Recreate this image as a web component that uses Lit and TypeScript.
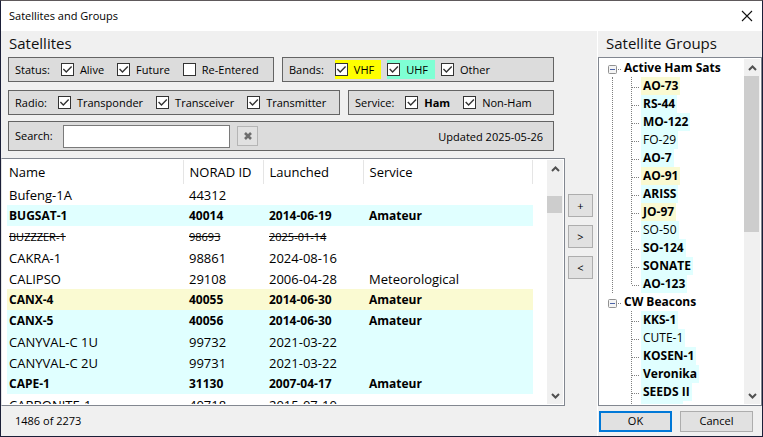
import { LitElement, html, css, svg } from "lit";
import { customElement, property } from "lit/decorators.js";
import { classMap } from "lit/directives/class-map.js";

interface Sat {
  name: string;
  id: string;
  launched: string;
  service?: string;
  bold?: boolean;
  gone?: boolean;
  tint?: "vhf" | "uhf";
}

interface Leaf {
  name: string;
  bold?: boolean;
  tint: "vhf" | "uhf";
}

interface Option {
  text: string;
  checked: boolean;
  kind?: string;
}

const SATS: Sat[] = [
  { name: "Bufeng-1A", id: "44312", launched: "" },
  { name: "BUGSAT-1", id: "40014", launched: "2014-06-19", service: "Amateur", bold: true, tint: "uhf" },
  { name: "BUZZZER-1", id: "98693", launched: "2025-01-14", gone: true },
  { name: "CAKRA-1", id: "98861", launched: "2024-08-16" },
  { name: "CALIPSO", id: "29108", launched: "2006-04-28", service: "Meteorological" },
  { name: "CANX-4", id: "40055", launched: "2014-06-30", service: "Amateur", bold: true, tint: "vhf" },
  { name: "CANX-5", id: "40056", launched: "2014-06-30", service: "Amateur", bold: true, tint: "uhf" },
  { name: "CANYVAL-C 1U", id: "99732", launched: "2021-03-22", tint: "uhf" },
  { name: "CANYVAL-C 2U", id: "99731", launched: "2021-03-22", tint: "uhf" },
  { name: "CAPE-1", id: "31130", launched: "2007-04-17", service: "Amateur", bold: true, tint: "uhf" },
  { name: "CARBONITE-1", id: "40718", launched: "2015-07-10" },
];

const GROUPS: { name: string; items: Leaf[] }[] = [
  {
    name: "Active Ham Sats",
    items: [
      { name: "AO-73", bold: true, tint: "vhf" },
      { name: "RS-44", bold: true, tint: "uhf" },
      { name: "MO-122", bold: true, tint: "uhf" },
      { name: "FO-29", tint: "uhf" },
      { name: "AO-7", bold: true, tint: "uhf" },
      { name: "AO-91", bold: true, tint: "vhf" },
      { name: "ARISS", bold: true, tint: "uhf" },
      { name: "JO-97", bold: true, tint: "vhf" },
      { name: "SO-50", tint: "uhf" },
      { name: "SO-124", bold: true, tint: "uhf" },
      { name: "SONATE", bold: true, tint: "uhf" },
      { name: "AO-123", bold: true, tint: "uhf" },
    ],
  },
  {
    name: "CW Beacons",
    items: [
      { name: "KKS-1", bold: true, tint: "uhf" },
      { name: "CUTE-1", tint: "uhf" },
      { name: "KOSEN-1", bold: true, tint: "uhf" },
      { name: "Veronika", bold: true, tint: "uhf" },
      { name: "SEEDS II", bold: true, tint: "uhf" },
      { name: "CUBEL", bold: true, tint: "uhf" },
    ],
  },
];

const chevron = (down: boolean) => html`<svg viewBox="0 0 9 6" width="9" height="6">
  ${svg`<path d=${down ? "M1 1 L4.5 4.5 L8 1" : "M1 5 L4.5 1.5 L8 5"} fill="none" stroke="#505050" stroke-width="2"/>`}
</svg>`;

@customElement("scroll-rail")
class ScrollRail extends LitElement {
  @property({ type: Number }) before = 0;
  @property({ type: Number }) size = 10;

  static styles = css`
    :host { flex: none; width: 16px; display: flex; flex-direction: column; background: #f0f0f0; }
    .cap { flex: none; height: 17px; display: flex; align-items: center; justify-content: center; }
    .track { flex: 1; display: flex; flex-direction: column; min-height: 0; }
    .thumb { background: #cdcdcd; margin-right: 1px; }
  `;

  render() {
    return html`
      <div class="cap">${chevron(false)}</div>
      <div class="track">
        <div style="flex: 0 0 ${this.before}%"></div>
        <div class="thumb" style="flex: 0 0 ${this.size}%"></div>
      </div>
      <div class="cap">${chevron(true)}</div>
    `;
  }
}

@customElement("filter-box")
class FilterBox extends LitElement {
  @property() caption = "";
  @property({ attribute: false }) options: Option[] = [];

  static styles = css`
    :host {
      display: flex; align-items: center; box-sizing: border-box; height: 25px;
      border: 1px solid #646464; background: #dcdcdc; padding-left: 6px;
      font-size: 11px; white-space: nowrap;
    }
    .cap { margin-right: 11px; padding-top: 1px; }
    .opt { display: flex; align-items: center; height: 19px; gap: 6px; margin-right: 6px; padding-right: 7px; }
    .strong { font-weight: 700; }
    .yellow { background: #ffff00; }
    .aqua { background: #7fffd4; }
    input {
      appearance: none; flex: none; width: 13px; height: 13px; margin: 0;
      border: 1px solid #333; background: #fff; box-sizing: border-box; display: grid;
    }
    input:checked::before {
      content: ""; width: 11px; height: 11px; background: #333;
      clip-path: polygon(9% 50%, 18% 42%, 40% 64%, 84% 18%, 93% 27%, 40% 82%);
    }
  `;

  render() {
    return html`
      <span class="cap">${this.caption}</span>
      ${this.options.map(
        (o) => html`<label class="opt ${o.kind ?? ""}"><input type="checkbox" .checked=${o.checked} />${o.text}</label>`,
      )}
    `;
  }
}

@customElement("app-root")
class AppRoot extends LitElement {
  static styles = css`
    :host {
      display: flex; flex-direction: column; height: 100vh; box-sizing: border-box;
      border: 1px solid #1b1f38; border-top-color: #5e595b; background: #f0f0f0;
      color: #000; font: 11px/16px "Open Sans", "Noto Sans", sans-serif; overflow: hidden;
    }
    * { box-sizing: border-box; }
    button { font: inherit; color: inherit; padding: 0; border: 1px solid #adadad; background: #e1e1e1; }
    .title {
      flex: none; height: 30px; background: #fff; display: flex; align-items: center;
      justify-content: space-between; padding: 0 9px 0 8px;
    }
    .close { border: 0; background: none; display: flex; padding: 0; }
    .body { flex: 1; display: flex; min-height: 0; }
    .left { flex: 1; display: flex; flex-direction: column; min-width: 0; }
    .right { flex: none; width: 165px; display: flex; flex-direction: column; border-left: 1px solid #fff; }
    h2 { margin: 0; font-size: 15px; font-weight: 400; line-height: 24px; height: 26px; padding-left: 8px; flex: none; color: #111; }
    .filters { flex: none; display: flex; flex-direction: column; gap: 8px; padding: 0 43px 0 7px; }
    .line { display: flex; gap: 8px; }
    .status { width: 266px; }
    .radio { width: 332px; }
    .rest { flex: 1; }
    .search {
      display: flex; align-items: center; height: 30px; margin-top: -2px;
      border: 1px solid #646464; background: #dcdcdc; padding: 0 10px 0 6px;
    }
    .search label { width: 48px; }
    .search input { width: 167px; height: 23px; border: 1px solid #7a7a7a; background: #fff; font: inherit; padding: 0 4px; }
    .clear { width: 21px; height: 20px; margin-left: 7px; display: grid; place-items: center; border-color: #b5b5b5; }
    .updated { margin-left: auto; padding-top: 2px; }
    .middle { flex: 1; display: flex; min-height: 0; margin-top: 7px; }
    .list { flex: 1; min-width: 0; display: flex; border: 1px solid #828790; background: #fff; padding: 1px 1px 1px 0; border-left-color: #e3e3e3; }
    .rows { flex: 1; min-width: 0; overflow: hidden; padding-left: 5px; }
    table { border-collapse: collapse; table-layout: fixed; width: 526px; font-size: 13px; line-height: 20px; }
    th { height: 24px; font-weight: 400; text-align: left; border-right: 1px solid #e5e5e5; }
    th, td { padding: 0 0 0 6px; white-space: nowrap; overflow: hidden; }
    th:first-child, td:first-child { padding-left: 2px; }
    td { height: 21px; }
    .c1 { width: 176px; } .c2 { width: 80px; } .c3 { width: 100px; }
    .bold { font-size: 12px; font-weight: 700; }
    .gone { font-size: 11px; text-decoration: line-through; }
    .uhf { background: #e0ffff; }
    .vhf { background: #fafad2; }
    .moves { flex: none; width: 32px; padding: 36px 4px 0 3px; display: flex; flex-direction: column; gap: 8px; }
    .moves button { height: 23px; }
    .foot { flex: none; height: 30px; display: flex; align-items: center; }
    .count { padding-left: 14px; }
    .tree { flex: 1; min-height: 0; display: flex; border: 1px solid #828790; background: #fff; padding: 1px; font-size: 12px; }
    .nodes { flex: 1; overflow: hidden; padding-left: 8px; }
    ul { list-style: none; margin: 0; padding: 0; }
    .group { display: flex; align-items: center; height: 18px; font-weight: 700; line-height: 18px; }
    .group svg { flex: none; margin-right: 1px; }
    .trunk { margin-left: 4px; padding-left: 18px; }
    .joined { border-left: 1px dotted #808080; }
    .open { border-left: 1px solid transparent; }
    .leaf { display: flex; height: 18px; line-height: 18px; }
    .leaf svg { flex: none; }
    .leaf span { padding: 0 2px; }
    .dialog { gap: 8px; padding-left: 1px; }
    .dialog button { width: 73px; height: 21px; }
    .dialog .ok { border: 2px solid #0078d7; }
  `;

  private options(...entries: [string, boolean, string?][]): Option[] {
    return entries.map(([text, checked, kind]) => ({ text, checked, kind }));
  }

  private row(s: Sat) {
    const cls = classMap({ bold: !!s.bold, gone: !!s.gone, uhf: s.tint === "uhf", vhf: s.tint === "vhf" });
    return html`<tr class=${cls}><td>${s.name}</td><td>${s.id}</td><td>${s.launched}</td><td>${s.service ?? ""}</td></tr>`;
  }

  private leaf(l: Leaf, last: boolean) {
    return html`<li class="leaf">
      <svg width="10" height="18"><path d="M.5 0V${last ? 10 : 18}M1 10.5H9" fill="none" stroke="#808080" stroke-dasharray="1 1" /></svg>
      <span class="${l.tint} ${l.bold ? "bold" : ""}">${l.name}</span>
    </li>`;
  }

  render() {
    return html`
      <header class="title">
        <span>Satellites and Groups</span>
        <button class="close" aria-label="Close">
          <svg width="12" height="12"><path d="M1 1 L11 11 M11 1 L1 11" stroke="#111" stroke-width="1.1" /></svg>
        </button>
      </header>
      <main class="body">
        <section class="left">
          <h2>Satellites</h2>
          <div class="filters">
            <div class="line">
              <filter-box class="status" caption="Status:"
                .options=${this.options(["Alive", true], ["Future", true], ["Re-Entered", false])}></filter-box>
              <filter-box class="rest" caption="Bands:"
                .options=${this.options(["VHF", true, "yellow"], ["UHF", true, "aqua"], ["Other", true])}></filter-box>
            </div>
            <div class="line">
              <filter-box class="radio" caption="Radio:"
                .options=${this.options(["Transponder", true], ["Transceiver", true], ["Transmitter", true])}></filter-box>
              <filter-box class="rest" caption="Service:"
                .options=${this.options(["Ham", true, "strong"], ["Non-Ham", true])}></filter-box>
            </div>
            <div class="search">
              <label for="q">Search:</label>
              <input id="q" type="text" />
              <button class="clear" aria-label="Clear">
                <svg width="8" height="8"><path d="M1 1 L7 7 M7 1 L1 7" stroke="#6d6d6d" stroke-width="2.6" /></svg>
              </button>
              <span class="updated">Updated 2025-05-26</span>
            </div>
          </div>
          <div class="middle">
            <div class="list">
              <div class="rows">
                <table>
                  <colgroup><col class="c1" /><col class="c2" /><col class="c3" /><col /></colgroup>
                  <thead><tr><th>Name</th><th>NORAD ID</th><th>Launched</th><th>Service</th></tr></thead>
                  <tbody>${SATS.map((s) => this.row(s))}</tbody>
                </table>
              </div>
              <scroll-rail .before=${9} .size=${8}></scroll-rail>
            </div>
            <div class="moves"><button>+</button><button>&gt;</button><button>&lt;</button></div>
          </div>
          <footer class="foot"><span class="count">1486 of 2273</span></footer>
        </section>
        <section class="right">
          <h2>Satellite Groups</h2>
          <div class="tree">
            <div class="nodes">
              ${GROUPS.map(
                (g, i) => html`
                  <div class="group">
                    <svg width="15" height="18">
                      <rect x=".5" y="6.5" width="8" height="8" rx="1" fill="#f4f4f4" stroke="#919191" />
                      <path d="M2 10.5H7" stroke="#4b63a7" />
                      <path d="M10 10.5H13" stroke="#808080" stroke-dasharray="1 1" />
                    </svg>
                    ${g.name}
                  </div>
                  <ul class="trunk ${i === 0 ? "joined" : "open"}">
                    ${g.items.map((l, n) => this.leaf(l, i === 0 && n === g.items.length - 1))}
                  </ul>
                `,
              )}
            </div>
            <scroll-rail .before=${0} .size=${50}></scroll-rail>
          </div>
          <footer class="foot dialog"><button class="ok">OK</button><button>Cancel</button></footer>
        </section>
      </main>
    `;
  }
}
